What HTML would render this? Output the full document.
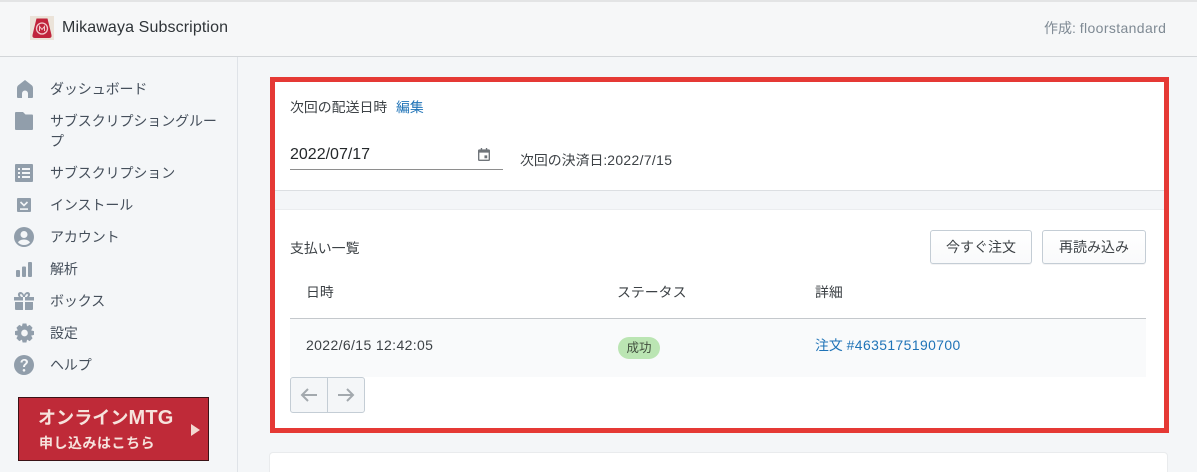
<!DOCTYPE html>
<html lang="ja"><head><meta charset="utf-8"><style>
html,body{margin:0;padding:0}
body{width:1197px;height:472px;overflow:hidden;position:relative;background:#f4f6f8;font-family:"Liberation Sans","Noto Sans CJK JP",sans-serif;font-size:14px;color:#3d4246}
.a{position:absolute;white-space:nowrap;line-height:20px}
.b{position:absolute}
.nav{position:absolute;left:50px;white-space:nowrap;line-height:20px;font-size:14px;letter-spacing:-.1px;color:#454f5b}
svg{position:absolute;fill:#919eab}
.blue{color:#1f73b7}
.ls{letter-spacing:.37px}
.btn{position:absolute;top:230px;height:34px;width:102px;box-sizing:border-box;border:1px solid #c4cdd5;border-radius:3px;background:linear-gradient(#fff,#f9fafb);text-align:center;line-height:33px;font-size:14px;color:#3d4246;box-shadow:0 1px 0 rgba(22,29,37,.05)}
</style></head><body>
<div class="b" style="left:0;top:0;width:1197px;height:2px;background:#e3e4e5"></div>
<div class="b" style="left:0;top:2px;width:1197px;height:54px;background:#f6f7f8"></div>
<div class="b" style="left:0;top:56px;width:1197px;height:1px;background:#d3d6d9"></div>
<div class="b" style="left:0;top:57px;width:237px;height:415px;background:#f4f6f8"></div>
<div class="b" style="left:237px;top:57px;width:1px;height:415px;background:#dfe3e8"></div>

<svg style="left:30px;top:16px;fill:none" width="24" height="24" viewBox="0 0 24 24"><rect width="24" height="24" fill="#ebe3d9"/><path d="M6.500 2.500H17.500L21.500 19Q22 22 19 22H5Q2 22 2.500 19Z" fill="#c0243c"/><circle cx="12" cy="12.500" r="5.500" fill="none" stroke="#f2c9cc" stroke-width="1.300"/><path d="M9.500 15v-4.500l2.500 3 2.500-3V15" fill="none" stroke="#f2c9cc" stroke-width="1"/></svg>
<div class="a" style="left:62px;top:18px;font-size:16px;letter-spacing:.12px;color:#2f3438">Mikawaya Subscription</div>
<div class="a" style="left:1044px;top:18px;font-size:14px;color:#7f8a94">作成: <span class="ls">floorstandard</span></div>

<svg style="left:16px;top:80px" width="18" height="18" viewBox="0 0 18 18"><path d="M9 0L16 5.500Q17 6.500 17 8V17Q17 18 16 18H12V13.500A3 3 0 0 0 6 13.500V18H2Q1 18 1 17V8Q1 6.500 2 5.500Z"/></svg>
<div class="nav" style="top:79px">ダッシュボード</div>

<svg style="left:15px;top:112px" width="18" height="18" viewBox="0 0 18 18"><path d="M1 0H8L10.500 2.500H17Q18 2.500 18 3.500V17Q18 18 17 18H1Q0 18 0 17V1Q0 0 1 0Z"/></svg>
<div class="nav" style="top:111px;line-height:20px;">サブスクリプショングルー<br>プ</div>

<svg style="left:15px;top:164px" width="18" height="18" viewBox="0 0 18 18"><path fill-rule="evenodd" d="M1 0H17Q18 0 18 1V17Q18 18 17 18H1Q0 18 0 17V1Q0 0 1 0ZM3 4V6H5V4ZM7 4V6H15V4ZM3 8V10H5V8ZM7 8V10H15V8ZM3 12V14H5V12ZM7 12V14H15V12Z"/></svg>
<div class="nav" style="top:163px">サブスクリプション</div>

<svg style="left:17px;top:198px" width="14" height="14" viewBox="0 0 14 14"><rect width="14" height="14" rx="1"/><path d="M3.500 4L7 7.500L10.500 4" fill="none" stroke="#f4f6f8" stroke-width="1.600"/><rect x="3" y="10.300" width="8" height="1.600" fill="#f4f6f8"/></svg>
<div class="nav" style="top:195px">インストール</div>

<svg style="left:14px;top:227px" width="20" height="20" viewBox="0 0 20 20"><path fill-rule="evenodd" d="M10 0A10 10 0 1 1 10 20A10 10 0 1 1 10 0ZM10 4A3.500 3.500 0 1 0 10 11A3.500 3.500 0 1 0 10 4ZM10 12.500C7 12.500 4.500 14 4 15.500C5.500 17 7.500 18 10 18C12.500 18 14.500 17 16 15.500C15.500 14 13 12.500 10 12.500Z"/></svg>
<div class="nav" style="top:227px">アカウント</div>

<svg style="left:16px;top:262px" width="16" height="15" viewBox="0 0 16 15"><rect y="8" width="4" height="7" rx="1"/><rect x="6" y="4.500" width="4" height="10.500" rx="1"/><rect x="12" y="0" width="4" height="15" rx="1"/></svg>
<div class="nav" style="top:259px">解析</div>

<svg style="left:14px;top:292px" width="20" height="18" viewBox="0 0 20 18"><path fill-rule="evenodd" d="M0 5H9V8.500H0ZM11 5H20V8.500H11ZM1 10H9V18H2Q1 18 1 17ZM11 10H19V17Q19 18 18 18H11ZM5 5C3 3 4 0 6.500 0C8 0 9.500 1.500 10 3C10.500 1.500 12 0 13.500 0C16 0 17 3 15 5H12.500C14.500 4 14 2 13.300 2C12 2 11 4 11 5H9C9 4 8 2 6.700 2C6 2 5.500 4 7.500 5Z"/></svg>
<div class="nav" style="top:291px">ボックス</div>

<svg style="left:15px;top:323px" width="19" height="20" viewBox="0 0 20 20"><path fill-rule="evenodd" d="M8 0H12L12.700 3L15.500 1.500L18.500 4.500L17 7.300L20 8V12L17 12.700L18.500 15.500L15.500 18.500L12.700 17L12 20H8L7.300 17L4.500 18.500L1.500 15.500L3 12.700L0 12V8L3 7.300L1.500 4.500L4.500 1.500L7.300 3ZM10 6.500A3.500 3.500 0 1 0 10 13.500A3.500 3.500 0 1 0 10 6.500Z"/></svg>
<div class="nav" style="top:323px">設定</div>

<svg style="left:14px;top:355px" width="20" height="20" viewBox="0 0 20 20"><path fill-rule="evenodd" d="M10 0A10 10 0 1 1 10 20A10 10 0 1 1 10 0ZM10 14A1.300 1.300 0 1 0 10 16.600A1.300 1.300 0 1 0 10 14ZM6.500 7.500H8.500C8.500 5 11.800 5.300 11.800 7C11.800 8.500 9 9 9 12H11C11 9.800 14 9.300 14 6.800C14 3 6.500 2.800 6.500 7.500Z"/></svg>
<div class="nav" style="top:355px">ヘルプ</div>

<div class="b" style="left:18px;top:397px;width:191px;height:64px;box-sizing:border-box;background:#bf2a38;border:1px solid #3a1216"></div>
<div class="a" style="left:38px;top:408px;font-size:18px;font-weight:bold;color:#f6e3dd;letter-spacing:.1px">オンライン<span style="font-size:20px;letter-spacing:.2px">MTG</span></div>
<div class="a" style="left:39px;top:433px;font-size:14px;font-weight:bold;color:#f6e3dd;letter-spacing:.5px">申し込みはこちら</div>
<svg style="left:191px;top:424px;fill:#f3d8d0" width="9" height="12" viewBox="0 0 9 12"><path d="M0 0L9 6L0 12Z"/></svg>

<div class="b" style="left:270px;top:453px;width:897px;height:19px;background:#fff;border-radius:3px 3px 0 0;box-shadow:0 0 0 1px rgba(63,63,68,.06)"></div>

<!-- red frame -->
<div class="b" style="left:270px;top:77px;width:899px;height:356px;box-sizing:border-box;background:#fff;border:5px solid #e53935"></div>
<div class="b" style="left:275px;top:190px;width:889px;height:1px;background:#dcdfe2"></div>
<div class="b" style="left:275px;top:191px;width:889px;height:18px;background:#f4f6f8"></div>
<div class="b" style="left:275px;top:209px;width:889px;height:1px;background:#ebedef"></div>

<div class="a" style="left:290px;top:97px;font-size:13.900px">次回の配送日時</div>
<div class="a blue" style="left:396px;top:97px;font-size:13.900px">編集</div>

<div class="a" style="left:290px;top:145px;font-size:16px;color:#24282b">2022/07/17</div>
<svg style="left:478px;top:148px;fill:#70757a" width="12" height="13" viewBox="0 0 13 14"><path fill-rule="evenodd" d="M3 0H4.500V1.500H8.500V0H10V1.500H11.500Q13 1.500 13 3V12.500Q13 14 11.500 14H1.500Q0 14 0 12.500V3Q0 1.500 1.500 1.500H3ZM1.500 5V12.500H11.500V5ZM7 8H10V11H7Z"/></svg>
<div class="b" style="left:290px;top:169px;width:213px;height:1px;background:#8e8e8e"></div>
<div class="a" style="left:520px;top:150px;font-size:13.900px">次回の決済日:<span class="ls">2022/7/15</span></div>

<div class="a" style="left:290px;top:238px;font-size:13.900px">支払い一覧</div>
<div class="btn" style="left:930px">今すぐ注文</div>
<div class="btn" style="left:1042px;width:104px">再読み込み</div>

<div class="a" style="left:306px;top:282px;font-size:13.900px">日時</div>
<div class="a" style="left:617px;top:282px;font-size:13.900px">ステータス</div>
<div class="a" style="left:815px;top:282px;font-size:13.900px">詳細</div>
<div class="b" style="left:290px;top:318px;width:856px;height:1px;background:#c4c8cc"></div>
<div class="b" style="left:290px;top:319px;width:856px;height:58px;background:#f9fafb"></div>
<div class="a ls" style="left:306px;top:335px;font-size:14px">2022/6/15 12:42:05</div>
<div class="b" style="left:618px;top:337px;width:42px;height:22px;border-radius:11px;background:#bbe5b3;text-align:center;line-height:22px;font-size:12.500px;color:#414f3e">成功</div>
<div class="a blue" style="left:815px;top:335px;font-size:13.900px">注文 <span style="letter-spacing:.42px">#4635175190700</span></div>

<div class="b" style="left:290px;top:377px;width:75px;height:36px;box-sizing:border-box;border:1px solid #c4cdd5;border-radius:3px;background:#f4f6f8"></div>
<div class="b" style="left:327px;top:378px;width:1px;height:34px;background:#c4cdd5"></div>
<svg style="left:300px;top:388px;fill:none;stroke:#a3a9ae;stroke-width:2" width="18" height="14" viewBox="0 0 18 14"><path d="M17 7H2M8 1L2 7L8 13"/></svg>
<svg style="left:337px;top:388px;fill:none;stroke:#a3a9ae;stroke-width:2" width="18" height="14" viewBox="0 0 18 14"><path d="M1 7H16M10 1L16 7L10 13"/></svg>
</body></html>
